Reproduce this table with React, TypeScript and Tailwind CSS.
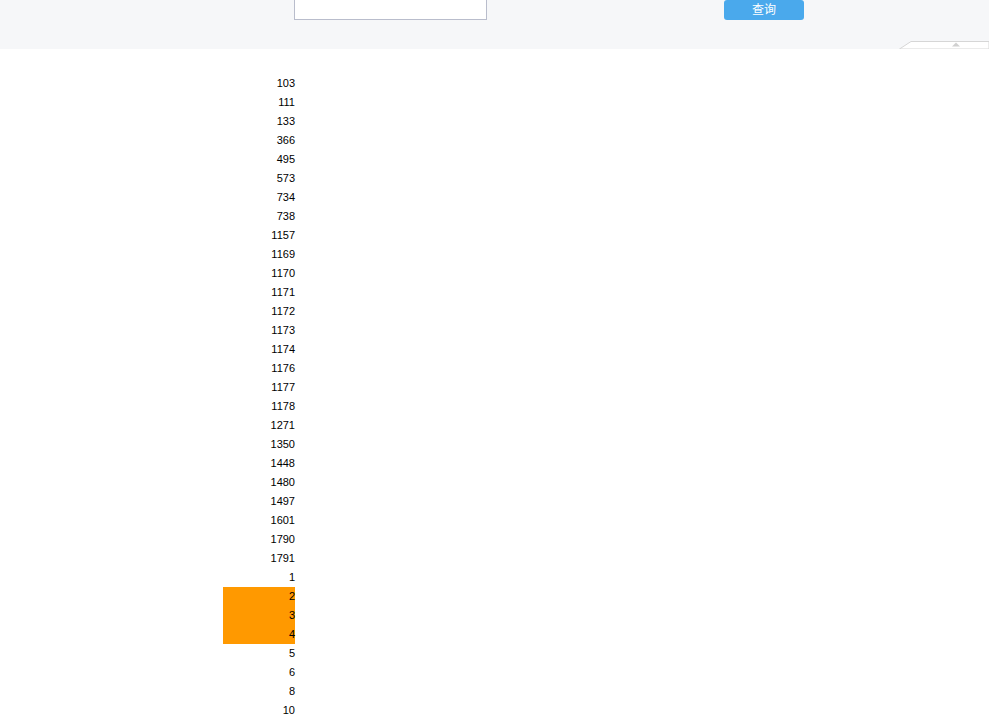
import React from "react";

const nums = [
  "103","111","133","366","495","573","734","738","1157","1169","1170","1171","1172","1173","1174","1176","1177","1178","1271","1350","1448","1480","1497","1601","1790","1791","1","2","3","4","5","6","8","10",
];
const hl = new Set(["2", "3", "4"]);

export default function App() {
  return (
    <div className="w-[989px] h-[718px] overflow-hidden bg-white" style={{ fontFamily: '"Liberation Sans", "Noto Sans CJK SC", sans-serif' }}>
      <div className="relative h-[49px] bg-[#f6f7f9] flex items-start">
        <div className="ml-[294px] mt-[-10px] w-[193px] h-[30px] bg-white border border-[#b9bdcc]" />
        <button className="ml-[237px] w-[80px] h-[20px] bg-[#4aa9ec] text-white text-[12px] leading-[20px] rounded-[3px] text-center">
          查询
        </button>
        <svg className="absolute right-0 bottom-0" width="90" height="8" viewBox="0 0 90 8">
          <polygon points="0.5,8 12,0.5 90,0.5 90,8" fill="#ffffff" stroke="#d6d6d6" strokeWidth="1" />
          <polygon points="53,5.5 57,1.5 61,5.5" fill="#d0d0d0" />
        </svg>
      </div>
      <div className="mt-[25px] ml-[223px] w-[72px] flex flex-col">
        {nums.map((n, i) => (
          <div
            key={i}
            className={`h-[19px] leading-[19px] text-right text-[11px] text-black ${hl.has(n) && i > 25 ? "bg-[#ff9900]" : ""}`}
          >
            {n}
          </div>
        ))}
      </div>
    </div>
  );
}
